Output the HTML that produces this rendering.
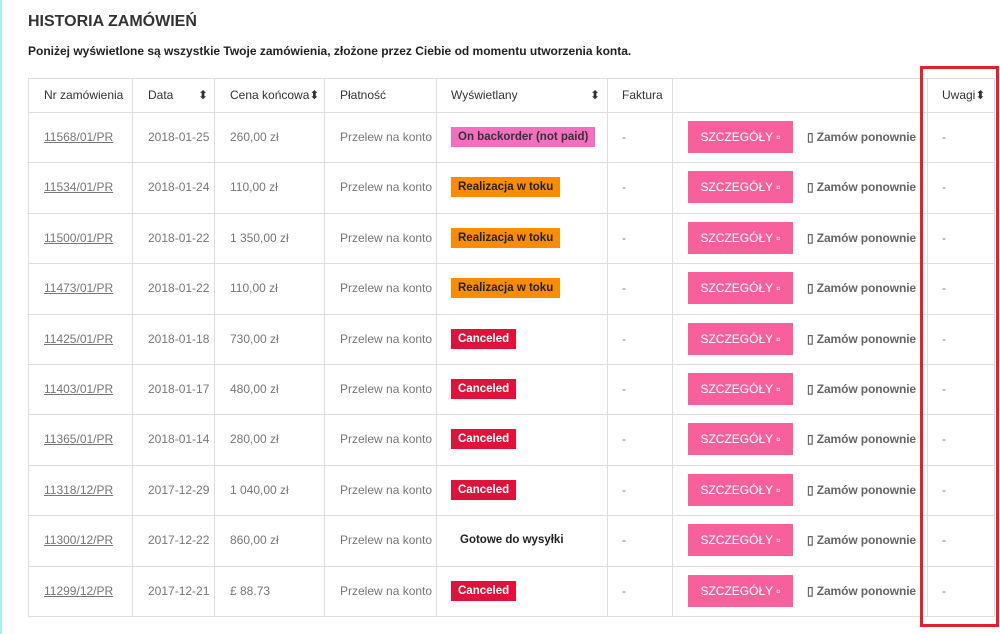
<!DOCTYPE html>
<html><head><meta charset="utf-8"><style>
*{margin:0;padding:0;box-sizing:border-box}
body{width:1000px;height:634px;background:#fff;font-family:"Liberation Sans",Arial,sans-serif;position:relative;overflow:hidden;color:#333}
.lb{position:absolute;left:0;top:0;width:2px;height:634px;background:#b5eaee}
h1{position:absolute;left:28px;top:13px;font-size:16px;font-weight:bold;color:#333}
.p{position:absolute;left:28px;top:44px;font-size:12px;font-weight:bold;color:#222}
.vl{position:absolute;top:78px;height:538px;width:1px;background:#ddd}
.hl{position:absolute;left:28px;width:967px;height:1px;background:#ddd}
.t{position:absolute;font-size:12px;color:#777;line-height:14px}
.h{position:absolute;font-size:12px;color:#333;top:88px}
a{color:#777;text-decoration:underline}
.b{position:absolute;left:451px;height:20px;font-size:11.5px;font-weight:bold;line-height:20px;padding:0 7px}
.btn{position:absolute;left:688px;width:105px;height:32px;background:#f7609a;color:#fff;font-size:12px;line-height:32px;text-align:center}
.z{position:absolute;left:807px;font-size:12px;font-weight:bold;color:#666;letter-spacing:-0.1px}
.red{position:absolute;left:920px;top:66px;width:79px;height:561px;border:3px solid #e3202b}
</style></head><body>
<div class="lb"></div>
<h1>HISTORIA ZAMÓWIEŃ</h1>
<div class="p">Poniżej wyświetlone są wszystkie Twoje zamówienia, złożone przez Ciebie od momentu utworzenia konta.</div>
<div class="vl" style="left:28px"></div><div class="vl" style="left:132px"></div><div class="vl" style="left:214px"></div><div class="vl" style="left:324px"></div><div class="vl" style="left:436px"></div><div class="vl" style="left:607px"></div><div class="vl" style="left:672px"></div><div class="vl" style="left:927px"></div><div class="vl" style="left:994px"></div>
<div class="hl" style="top:78px"></div><div class="hl" style="top:112px"></div><div class="hl" style="top:162px"></div><div class="hl" style="top:213px"></div><div class="hl" style="top:263px"></div><div class="hl" style="top:314px"></div><div class="hl" style="top:364px"></div><div class="hl" style="top:414px"></div><div class="hl" style="top:465px"></div><div class="hl" style="top:515px"></div><div class="hl" style="top:566px"></div><div class="hl" style="top:616px"></div>
<div class="h" style="left:44px">Nr zamówienia</div>
<div class="h" style="left:148px">Data</div><div class="h" style="left:198px">⬍</div>
<div class="h" style="left:230px">Cena końcowa⬍</div>
<div class="h" style="left:340px">Płatność</div>
<div class="h" style="left:451px">Wyświetlany</div><div class="h" style="left:590px">⬍</div>
<div class="h" style="left:622px">Faktura</div>
<div class="h" style="left:942px">Uwagi⬍</div>
<div id="rows"></div>
<script>
var d=[["11568/01/PR","2018-01-25","260,00 zł",0],["11534/01/PR","2018-01-24","110,00 zł",1],["11500/01/PR","2018-01-22","1 350,00 zł",1],["11473/01/PR","2018-01-22","110,00 zł",1],["11425/01/PR","2018-01-18","730,00 zł",2],["11403/01/PR","2018-01-17","480,00 zł",2],["11365/01/PR","2018-01-14","280,00 zł",2],["11318/12/PR","2017-12-29","1 040,00 zł",2],["11300/12/PR","2017-12-22","860,00 zł",3],["11299/12/PR","2017-12-21","£ 88.73",2]];
var tops=[112,162,213,263,314,364,414,465,515,566],h="";
d.forEach(function(r,i){var y=tops[i]+18;
h+='<div class="t" style="left:44px;top:'+y+'px"><a>'+r[0]+'</a></div><div class="t" style="left:148px;top:'+y+'px">'+r[1]+'</div><div class="t" style="left:230px;top:'+y+'px">'+r[2]+'</div><div class="t" style="left:340px;top:'+y+'px">Przelew na konto</div><div class="t" style="left:622px;top:'+y+'px">-</div><div class="t" style="left:942px;top:'+y+'px">-</div>';
var by=y-3;
if(r[3]==0)h+='<div class="b" style="top:'+by+'px;background:#f56fbf;color:#333">On backorder (not paid)</div>';
if(r[3]==1)h+='<div class="b" style="top:'+by+'px;background:#fb8c00;color:#222">Realizacja w toku</div>';
if(r[3]==2)h+='<div class="b" style="top:'+by+'px;background:#dc143c;color:#fff">Canceled</div>';
if(r[3]==3)h+='<div class="b" style="top:'+by+'px;color:#222;padding:0 9px">Gotowe do wysyłki</div>';
h+='<div class="btn" style="top:'+(tops[i]+9)+'px">SZCZEGÓŁY ▫</div><div class="z" style="top:'+y+'px">▯ Zamów ponownie</div>';});
document.getElementById("rows").innerHTML=h;
</script>
<div class="red"></div>
</body></html>
